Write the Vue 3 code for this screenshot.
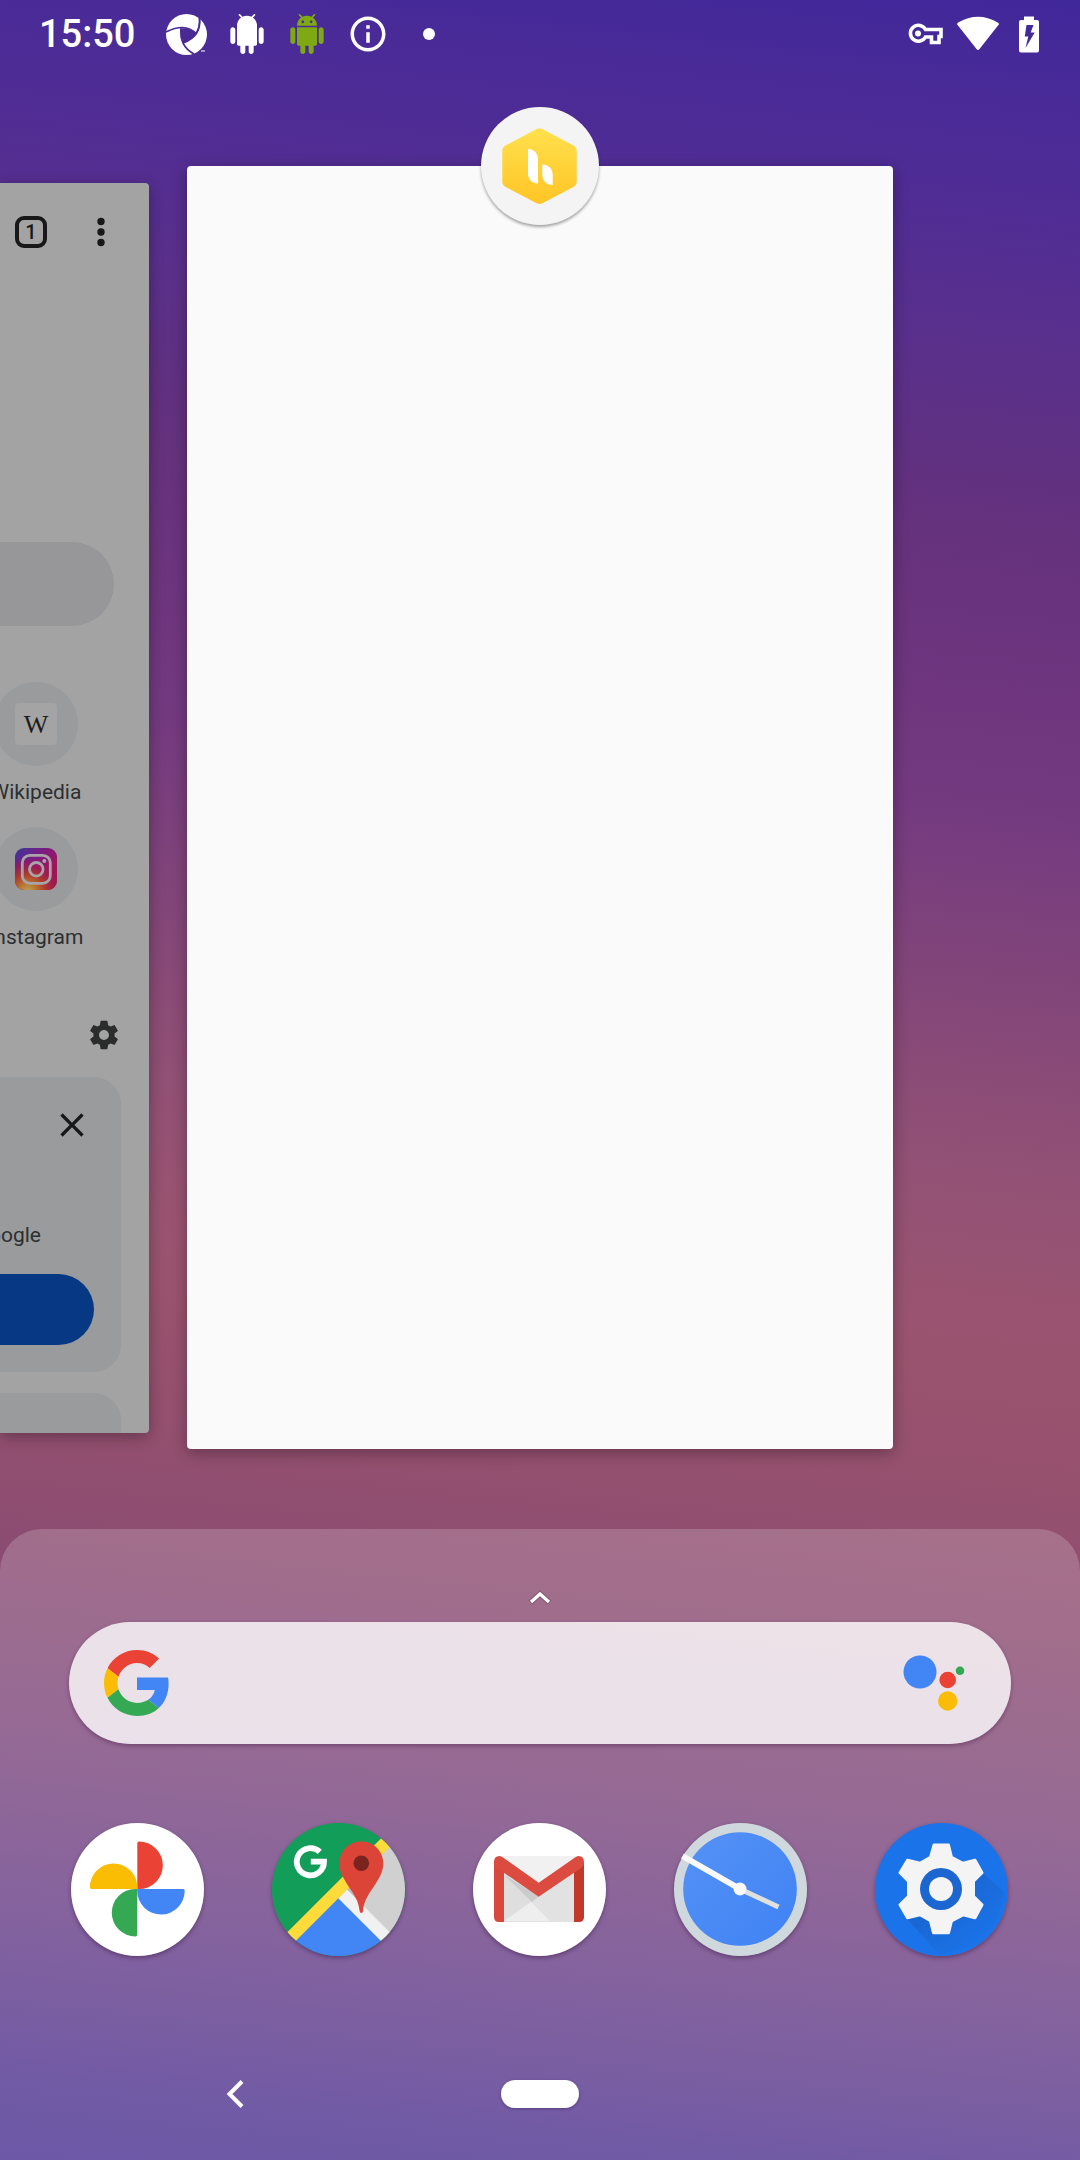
<script setup>
const ANDROID =
  'M6 18c0 .55.45 1 1 1h1v3.5c0 .83.67 1.5 1.5 1.5s1.5-.67 1.5-1.5V19h2v3.5c0 .83.67 1.5 1.5 1.5s1.5-.67 1.5-1.5V19h1c.55 0 1-.45 1-1V8H6v10zM3.5 8C2.67 8 2 8.67 2 9.5v7c0 .83.67 1.5 1.5 1.5S5 17.33 5 16.5v-7C5 8.67 4.33 8 3.5 8zm17 0c-.83 0-1.5.67-1.5 1.5v7c0 .83.67 1.5 1.5 1.5s1.5-.67 1.5-1.5v-7c0-.83-.67-1.5-1.5-1.5zm-4.97-5.84l1.3-1.3c.2-.2.2-.51 0-.71-.2-.2-.51-.2-.71 0l-1.48 1.48C13.85 1.23 12.95 1 12 1c-.96 0-1.86.23-2.66.63L7.85.15c-.2-.2-.51-.2-.71 0-.2.2-.2.51 0 .71l1.31 1.31C6.97 3.26 6 5.01 6 7h12c0-1.99-.97-3.75-2.47-4.84z'
const GEAR =
  'M19.43 12.98c.04-.32.07-.64.07-.98s-.03-.66-.07-.98l2.11-1.65c.19-.15.24-.42.12-.64l-2-3.46c-.12-.22-.39-.3-.61-.22l-2.49 1c-.52-.4-1.08-.73-1.69-.98l-.38-2.65C14.46 2.18 14.25 2 14 2h-4c-.25 0-.46.18-.49.42l-.38 2.65c-.61.25-1.17.59-1.69.98l-2.49-1c-.23-.09-.49 0-.61.22l-2 3.46c-.13.22-.07.49.12.64l2.11 1.65c-.04.32-.07.65-.07.98s.03.66.07.98l-2.11 1.65c-.19.15-.24.42-.12.64l2 3.46c.12.22.39.3.61.22l2.49-1c.52.4 1.08.73 1.69.98l.38 2.65c.03.24.24.42.49.42h4c.25 0 .46-.18.49-.42l.38-2.65c.61-.25 1.17-.59 1.69-.98l2.49 1c.23.09.49 0 .61-.22l2-3.46c.12-.22.07-.49-.12-.64l-2.11-1.65zM12 15.5c-1.93 0-3.5-1.57-3.5-3.5s1.57-3.5 3.5-3.5 3.5 1.57 3.5 3.5-1.57 3.5-3.5 3.5z'
const petals = [
  { color: '#ea4335', turn: 0 },
  { color: '#4285f4', turn: 90 },
  { color: '#34a853', turn: 180 },
  { color: '#fbbc04', turn: 270 },
]
</script>

<template>
  <div class="screen">
    <header class="status">
      <time class="clock">15:50</time>
      <svg width="41" height="41" viewBox="0 0 41 41" aria-hidden="true">
        <circle cx="20.5" cy="20.5" r="20.5" fill="#fff" />
        <path d="M14.5 14.5Q24 13 30.5 20Q26 26 17.5 29Q14 21 14.500 14.500Z" fill="#492a94" />
        <g fill="none" stroke="#492a94" stroke-width="1.600">
          <path d="M0 18Q20 8 30.500 20" />
          <path d="M33.500 3Q36 22 17 29" />
          <path d="M28 40Q13 32 15 14" />
          <path d="M33.500 4Q34 14 30 19.500" />
        </g>
        <path d="M35 37h4" stroke="#fff" stroke-width="1" />
      </svg>
      <svg width="40" height="40" viewBox="0 0 24 24" fill="#fff" aria-hidden="true">
        <path :d="ANDROID" />
        <path d="M6 6h12v4H6z" />
      </svg>
      <svg width="40" height="40" viewBox="0 0 24 24" fill="#7fa912" aria-hidden="true">
        <path :d="ANDROID" />
        <circle cx="9.500" cy="4.700" r=".8" fill="#492a94" />
        <circle cx="14.500" cy="4.700" r=".8" fill="#492a94" />
      </svg>
      <svg width="42" height="42" viewBox="0 0 24 24" fill="#fff" aria-hidden="true">
        <path d="M11 7h2v2h-2zm0 4h2v6h-2zm1-9C6.480 2 2 6.480 2 12s4.480 10 10 10 10-4.480 10-10S17.520 2 12 2zm0 18c-4.410 0-8-3.590-8-8s3.590-8 8-8 8 3.590 8 8-3.590 8-8 8z" />
      </svg>
      <svg width="40" height="40" viewBox="0 0 40 40" aria-hidden="true"><circle cx="20" cy="20" r="6" fill="#fff" /></svg>
      <div class="system">
        <svg width="36" height="24" viewBox="0 0 36 24" fill="none" stroke="#fff" stroke-width="3.600" aria-hidden="true">
          <path d="M17.500 7.500H33V14.500h-2v6H23.500V15h-6A8 8 0 1 1 17.500 7.500Z" />
          <circle cx="10" cy="11.500" r="3" fill="#fff" stroke="none" />
        </svg>
        <svg width="44" height="36" viewBox="0 0 44 36" fill="#fff" aria-hidden="true">
          <path d="M2 9.500Q0 8 2.200 6.500Q22-5 41.800 6.500Q44 8 42 9.500L23.500 33Q22 34.800 20.500 33Z" />
        </svg>
        <svg width="34" height="38" viewBox="0 0 34 38" aria-hidden="true">
          <path d="M12 1.500h10V5h3q2 0 2 2v28.500q0 2-2 2H9q-2 0-2-2V7q0-2 2-2h3Z" fill="#fff" />
          <path d="M14.500 10h7l-2.800 7.500h4L13.500 33l2.800-11.500h-3.500Z" fill="#43299a" />
        </svg>
      </div>
    </header>

    <main class="recents">
      <section class="peek" aria-label="Browser">
        <div class="page">
          <div class="toolbar">
            <button class="tabs" aria-label="Open tabs">1</button>
            <button class="plain" aria-label="More options">
              <svg width="8" height="30" viewBox="0 0 8 30" fill="#171817"><circle cx="4" cy="4.500" r="3.700" /><circle cx="4" cy="15" r="3.700" /><circle cx="4" cy="25.500" r="3.700" /></svg>
            </button>
          </div>
          <input class="omnibox" type="text" aria-label="Search or type URL" />
          <div class="tiles">
            <a class="tile" href="#wikipedia">
              <span class="disc"><span class="wiki">W</span></span>
              <span class="name">Wikipedia</span>
            </a>
            <a class="tile" href="#instagram">
              <span class="disc">
                <svg width="42" height="42" viewBox="0 0 42 42" aria-hidden="true">
                  <defs>
                    <linearGradient id="ig-base" x1="0" y1="0" x2="1" y2=".9">
                      <stop offset="0" stop-color="#3a3899" /><stop offset=".38" stop-color="#791b86" /><stop offset=".7" stop-color="#9e1560" /><stop offset="1" stop-color="#9c1845" />
                    </linearGradient>
                    <radialGradient id="ig-warm" cx=".3" cy="1.050" r=".85">
                      <stop offset="0" stop-color="#b9a45c" /><stop offset=".2" stop-color="#b98035" /><stop offset=".5" stop-color="#ad3b2c" /><stop offset=".8" stop-color="#a01850" stop-opacity=".6" /><stop offset="1" stop-color="#9e1560" stop-opacity="0" />
                    </radialGradient>
                  </defs>
                  <rect width="42" height="42" rx="9" fill="url(#ig-base)" />
                  <rect width="42" height="42" rx="9" fill="url(#ig-warm)" />
                  <g fill="none" stroke="#a8a5a8" stroke-width="2.800"><rect x="7.300" y="7.300" width="28" height="28" rx="7.500" /><circle cx="21.300" cy="21.300" r="6.800" /></g>
                  <circle cx="29.300" cy="13" r="2" fill="#a8a5a8" />
                </svg>
              </span>
              <span class="name">Instagram</span>
            </a>
          </div>
          <button class="plain gear" aria-label="Feed settings">
            <svg width="34" height="34" viewBox="0 0 24 24" fill="#2b2d2d"><path :d="GEAR" /></svg>
          </button>
          <div class="promo">
            <button class="plain close" aria-label="Close">
              <svg width="40" height="40" viewBox="0 0 24 24" fill="#171819"><path d="M19 6.410 17.590 5 12 10.590 6.410 5 5 6.410 10.590 12 5 17.590 6.410 19 12 13.410 17.590 19 19 17.590 13.410 12z" /></svg>
            </button>
            <p class="line">Google</p>
            <button class="action" aria-label="Continue"></button>
          </div>
          <div class="next"></div>
        </div>
      </section>

      <section class="current" aria-label="Current app">
        <svg class="badge" viewBox="0 0 118 118" aria-hidden="true">
          <defs>
            <linearGradient id="hex" x1="0" y1="20" x2="0" y2="98" gradientUnits="userSpaceOnUse">
              <stop offset="0" stop-color="#ffe14d" /><stop offset="1" stop-color="#ffc425" />
            </linearGradient>
          </defs>
          <path d="M58.500 27.300 89.700 43.800V74.600L58.500 91 27.300 74.600V43.800Z" fill="url(#hex)" stroke="url(#hex)" stroke-width="12" stroke-linejoin="round" />
          <path d="M47 42C54 42.500 57 47 57 53V76.500C50 76 47 72 47 66ZM61.300 57.500C68.500 58 71.700 62 71.700 68V78C64.500 77.500 61.300 73 61.300 67Z" fill="#fff" />
        </svg>
      </section>
    </main>

    <footer class="dock">
      <button class="plain handle" aria-label="All apps">
        <svg width="24" height="16" viewBox="0 0 24 16" fill="none"><path d="M2.500 12.500 12 4l9.500 8.500" stroke="#6b3f60" stroke-opacity=".5" stroke-width="5.500" /><path d="M3 12 12 4l9 8" stroke="#fff" stroke-width="3.200" /></svg>
      </button>
      <form class="search" role="search" @submit.prevent>
        <svg width="66" height="66" viewBox="0 0 48 48" aria-hidden="true">
          <path fill="#ea4335" d="M24 9.500c3.540 0 6.710 1.220 9.210 3.600l6.850-6.850C35.900 2.380 30.470 0 24 0 14.620 0 6.510 5.380 2.560 13.220l7.980 6.190C12.430 13.720 17.740 9.500 24 9.500z" />
          <path fill="#4285f4" d="M46.980 24.550c0-1.570-.15-3.090-.38-4.550H24v9.020h12.940c-.58 2.960-2.260 5.480-4.780 7.180l7.730 6c4.510-4.180 7.090-10.360 7.090-17.650z" />
          <path fill="#fbbc05" d="M10.530 28.590c-.48-1.450-.76-2.990-.76-4.590s.27-3.140.76-4.590l-7.980-6.190C.92 16.460 0 20.120 0 24c0 3.880.92 7.540 2.560 10.780l7.970-6.190z" />
          <path fill="#34a853" d="M24 48c6.480 0 11.930-2.130 15.890-5.810l-7.730-6c-2.150 1.450-4.920 2.300-8.160 2.300-6.260 0-11.570-4.220-13.470-9.910l-7.980 6.190C6.510 42.620 14.620 48 24 48z" />
        </svg>
        <input type="text" aria-label="Search" />
        <button class="plain" type="button" aria-label="Assistant">
          <svg width="62" height="58" viewBox="0 0 62 58"><circle cx="17" cy="18" r="16.500" fill="#4285f4" /><circle cx="44.700" cy="26" r="8.300" fill="#ea4335" /><circle cx="57" cy="16.700" r="4.300" fill="#34a853" /><circle cx="44.700" cy="47" r="9.700" fill="#fbbc05" /></svg>
        </button>
      </form>

      <nav class="apps" aria-label="Favourite apps">
        <a href="#photos" aria-label="Photos">
          <svg viewBox="0 0 133 133">
            <circle cx="66.500" cy="66.500" r="66.500" fill="#fff" />
            <path v-for="p in petals" :key="p.turn" :fill="p.color" :transform="`rotate(${p.turn} 66.300 66)`" d="M66.300 66V20.200Q66.300 18.600 68 18.600A23.700 23.700 0 0 1 68.300 66Z" />
          </svg>
        </a>
        <a href="#maps" aria-label="Maps">
          <svg viewBox="0 0 133 133">
            <defs><clipPath id="disc"><circle cx="66.500" cy="66.500" r="66.500" /></clipPath></defs>
            <g clip-path="url(#disc)">
              <path d="M0 0h133v133H0z" fill="#129d58" />
              <path d="M66.300 75.300 133 142V8Z" fill="#d0d0d0" />
              <path d="M75 66.600 84 57.500 89 90 88 80Z" fill="#bdbdbd" />
              <path d="M66.300 75.300 8 133h117Z" fill="#4285f4" />
              <path d="M66.300 75.300 75 66.600 133 124.600V142Z" fill="#f1f1f1" />
              <path d="M7 117.400 15.700 126 133 8.700 124.500 0Z" fill="#ffdc3c" />
            </g>
            <path d="M89.300 90Q87.800 90 87.500 87.500C86.500 70 67.300 58 67.300 40.300a22 22 0 0 1 44 0C111.300 58 92.100 70 91.100 87.500Q90.800 90 89.300 90Z" fill="#db4437" />
            <circle cx="89.300" cy="40.300" r="7.800" fill="#7b231e" />
            <path d="M47.800 28.900A13.600 13.600 0 1 0 52 38.700H38.800" fill="none" stroke="#fff" stroke-width="5.800" />
          </svg>
        </a>
        <a href="#gmail" aria-label="Gmail">
          <svg viewBox="0 0 133 133">
            <circle cx="66.500" cy="66.500" r="66.500" fill="#fff" />
            <path d="M27 33h79v66H27z" fill="#e2e2e2" />
            <path d="M27 33h79L66 66Z" fill="#f1f1f1" />
            <path d="M31 49 62 76 31 98Z" fill="#dedede" />
            <path d="M31 52 59 79 66 73Z" fill="#cbcbcb" />
            <path d="M31 98 58 79 77 98Z" fill="#eee" />
            <path d="M31 42v57h-5q-5 0-5-5V39Z" fill="#d8493d" />
            <path d="M101 42v57h5q5 0 5-5V39Z" fill="#c0392b" />
            <path d="M21 39Q21 33 26.500 33Q28 33 30 34.500L65.700 59.700 102 34.500Q104 33 105.500 33Q111 33 111 39Q111 43 108 45L65.700 73.700 24 45Q21 43 21 39Z" fill="#dc4b3f" />
          </svg>
        </a>
        <a href="#clock" aria-label="Clock">
          <svg viewBox="0 0 133 133">
            <defs>
              <linearGradient id="face" x1="0" y1="0" x2="1" y2="1"><stop offset="0" stop-color="#5592f6" /><stop offset="1" stop-color="#3f82f4" /></linearGradient>
            </defs>
            <circle cx="66.500" cy="66.500" r="66.500" fill="#cfd8dc" />
            <circle cx="66" cy="66" r="56.800" fill="url(#face)" />
            <path d="M66 66 104.500 84" stroke="#e0e0e0" stroke-width="5" />
            <path d="M66 66 8.500 33" stroke="#fafafa" stroke-width="6" />
            <circle cx="66" cy="66" r="6.500" fill="#fafafa" />
          </svg>
        </a>
        <a href="#settings" aria-label="Settings">
          <svg viewBox="0 0 133 133">
            <defs>
              <linearGradient id="cast" x1=".2" y1=".2" x2=".8" y2=".8"><stop offset=".2" stop-color="#1a60c8" /><stop offset="1" stop-color="#1a73e8" /></linearGradient>
            </defs>
            <circle cx="66.500" cy="66.500" r="66.500" fill="#1a73e8" />
            <path d="M109 51 129 69Q122 122 64 131L32 96Z" fill="url(#cast)" opacity=".7" />
            <path d="M59 22h14.500l3 12.300 11.500 6 12-3 7 12.500-8.500 8.500v15l8.500 8.500-7 13-12-3-11.500 6-3 12H58.500l-3-12-10.500-6-12.500 3-7.500-13 8.500-8.500v-15L25 49.800l7.500-12.500 12.500 3 10.500-6Z" fill="#f4f4f4" stroke="#f4f4f4" stroke-width="3" stroke-linejoin="round" />
            <circle cx="66" cy="66" r="21" fill="#1b66d0" />
            <circle cx="66" cy="66" r="12" fill="#f4f4f4" />
          </svg>
        </a>
      </nav>

      <nav class="keys" aria-label="System navigation">
        <button class="plain" aria-label="Back">
          <svg width="20" height="30" viewBox="0 0 20 30" fill="none"><path d="M17 2.500 4.500 15 17 27.500" stroke="#fff" stroke-width="4" /></svg>
        </button>
        <button class="home" aria-label="Home"></button>
      </nav>
    </footer>
  </div>
</template>

<style>
body {
  margin: 0;
}
</style>

<style scoped>
* {
  box-sizing: border-box;
}
svg {
  display: block;
  flex-shrink: 0;
}
.screen {
  display: flex;
  flex-direction: column;
  min-height: 100vh;
  overflow: hidden;
  font-family: Roboto, "Liberation Sans", sans-serif;
  background: linear-gradient(186deg, #40279a 0%, #482a98 4%, #512d94 10%, #5a308b 16%, #62317f 22%, #69337d 26%, #6d357e 30%, #743a80 36%, #834679 44%, #925175 52%, #9a5471 58%, #9a536e 61%, #94506f 67%, #8b4c72 73%, #7b477e 82%, #653d89 90%, #4f3491 97%, #4b3293 100%);
}
.status {
  display: flex;
  align-items: center;
  gap: 20px;
  height: 66px;
  padding: 2px 34px 0 39px;
}
.clock {
  padding-right: 11px;
  font-size: 38px;
  font-weight: 500;
  line-height: 48px;
  color: #fff;
}
.system {
  display: flex;
  align-items: center;
  gap: 12px;
  margin-left: auto;
}
.plain {
  display: flex;
  padding: 0;
  border: 0;
  background: none;
}
.recents {
  display: grid;
  grid-template-columns: 149fr 38fr 706fr 187fr;
  align-items: start;
  padding: 100px 0 80px;
}
.peek {
  display: flex;
  justify-content: flex-end;
  margin-top: 17px;
  overflow: hidden;
  border-radius: 0 4px 4px 0;
  background: #a3a3a3;
  box-shadow: 0 4px 16px rgba(0, 0, 0, 0.32);
}
.page {
  display: flex;
  flex: 0 0 688px;
  flex-direction: column;
}
.toolbar {
  display: flex;
  align-items: center;
  justify-content: flex-end;
  gap: 50px;
  height: 98px;
  padding-right: 44px;
}
.tabs {
  width: 32px;
  height: 32px;
  padding: 0;
  border: 4px solid #171817;
  border-radius: 9px;
  background: none;
  font: 500 20px/24px Roboto, sans-serif;
  color: #171817;
}
.omnibox {
  height: 84px;
  margin: 261px 35px 0;
  border: 0;
  border-radius: 42px;
  background: #979799;
}
.tiles {
  display: flex;
  flex-direction: column;
  align-items: flex-end;
  gap: 21px;
  margin-top: 56px;
  padding-right: 71px;
}
.tile {
  display: flex;
  flex-direction: column;
  align-items: center;
  gap: 12px;
  width: 84px;
  color: #2d2f30;
  text-decoration: none;
}
.disc {
  display: flex;
  align-items: center;
  justify-content: center;
  width: 84px;
  height: 84px;
  border-radius: 50%;
  background: #999b9d;
}
.wiki {
  width: 42px;
  height: 42px;
  border-radius: 4px;
  background: #a4a4a4;
  font: 26px/44px "Liberation Serif", serif;
  text-align: center;
  color: #1c1c1c;
}
.name,
.line {
  font-size: 21px;
  line-height: 28px;
}
.gear {
  align-self: flex-end;
  margin: 67px 28px 0 0;
}
.promo {
  display: flex;
  flex-direction: column;
  margin: 25px 28px 0;
  padding: 28px 27px 27px;
  border-radius: 27px;
  background: #999b9c;
}
.close {
  align-self: flex-end;
  margin-right: 2px;
}
.line {
  margin: 76px 53px 25px 0;
  text-align: right;
  color: #2d2f30;
}
.action {
  height: 71px;
  border: 0;
  border-radius: 36px;
  background: #063884;
}
.next {
  height: 40px;
  margin: 21px 28px 0;
  border-radius: 27px 27px 0 0;
  background: #999b9c;
}
.current {
  position: relative;
  grid-column: 3;
  aspect-ratio: 706 / 1283;
  border-radius: 4px;
  background: #fafafa;
  box-shadow: 0 4px 16px rgba(0, 0, 0, 0.32);
}
.badge {
  position: absolute;
  top: -59px;
  left: calc(50% - 59px);
  width: 118px;
  height: 118px;
  border-radius: 50%;
  background: #f4f4f4;
  box-shadow: 0 2px 3px rgba(0, 0, 0, 0.35);
}
.dock {
  display: flex;
  flex-direction: column;
  margin-top: auto;
  padding-top: 61px;
  border-radius: 42px 42px 0 0;
  background: rgba(255, 255, 255, 0.19);
}
.handle {
  align-self: center;
}
.search {
  display: flex;
  align-items: center;
  height: 122px;
  margin: 16px 69px 0;
  padding: 0 46px 0 35px;
  border-radius: 61px;
  background: rgba(255, 255, 255, 0.8);
  box-shadow: 0 2px 4px rgba(60, 20, 60, 0.4);
}
.search input {
  flex: 1;
  min-width: 0;
  height: 66px;
  border: 0;
  background: none;
  font: 32px/40px Roboto, sans-serif;
}
.apps {
  display: flex;
  justify-content: space-between;
  margin-top: 79px;
  padding: 0 72px 0 71px;
}
.apps a {
  width: 133px;
  height: 133px;
  border-radius: 50%;
  box-shadow: 0 2px 4px rgba(50, 20, 60, 0.45);
}
.keys {
  display: grid;
  grid-template-columns: repeat(3, 1fr);
  align-items: center;
  justify-items: center;
  height: 132px;
  margin-top: 72px;
  padding: 0 82px;
}
.home {
  width: 78px;
  height: 28px;
  border: 0;
  border-radius: 14px;
  background: #fff;
  box-shadow: 0 1px 3px rgba(40, 20, 80, 0.4);
}
</style>
